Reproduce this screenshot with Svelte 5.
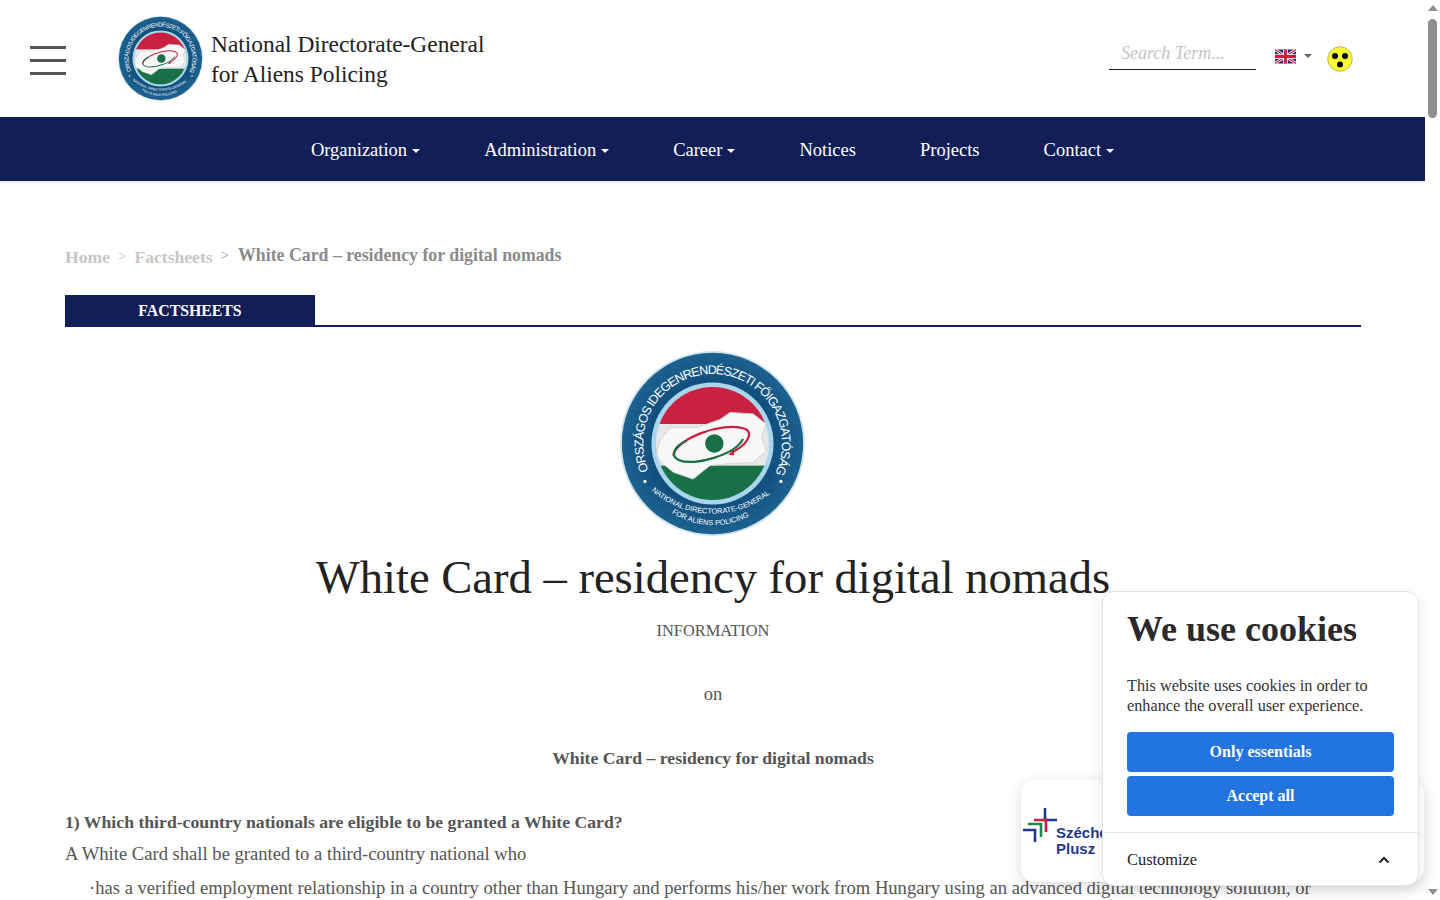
<script lang="ts">
  const navItems = [
    { label: 'Organization', caret: true },
    { label: 'Administration', caret: true },
    { label: 'Career', caret: true },
    { label: 'Notices', caret: false },
    { label: 'Projects', caret: false },
    { label: 'Contact', caret: true },
  ];
</script>

{#snippet logo(id: string)}
  <svg class="seal" viewBox="0 0 200 200" aria-hidden="true">
    <defs>
      <path id="{id}-top" d="M31 129.3A75 75 0 1 1 169 129.3" />
      <path id="{id}-b1" d="M34 151A100 100 0 0 0 166 151" />
      <path id="{id}-b2" d="M56 175A83 83 0 0 0 146 175" />
      <clipPath id="{id}-flag"><circle cx="100" cy="100" r="61" /></clipPath>
      <radialGradient id="{id}-ring" cx="50%" cy="50%" r="50%">
        <stop offset="60%" stop-color="#0f4a78" />
        <stop offset="100%" stop-color="#1c6290" />
      </radialGradient>
    </defs>
    <circle cx="100" cy="100" r="100" fill="#d5e3ea" />
    <circle cx="100" cy="100" r="98" fill="url(#{id}-ring)" />
    <circle cx="100" cy="100" r="66" fill="#a9d6ec" />
    <g clip-path="url(#{id}-flag)">
      <rect x="30" y="30" width="140" height="49" fill="#c9213f" />
      <rect x="30" y="79" width="140" height="45" fill="#e6e8e8" />
      <rect x="30" y="124" width="140" height="46" fill="#1a7046" />
    </g>
    <path
      d="M39.5 111.5 43 97 54 83 83 83 108 74 119 66.5 144 68 158 79 153 93.5 158 108 144 120.5 115 122 97 124 79 138.5 57.5 131 43 119Z"
      fill="#f7f7f7"
      stroke="#cfd4d6"
      stroke-width="1"
    />
    <g fill="none" stroke-width="2.4">
      <path d="M57.5 113C60 95 110 76 135 84 145 88 138 102 120 110" stroke="#c9213f" />
      <path d="M72 97C58 103 54 114 64 118 80 125 125 112 133 95" stroke="#1a7046" />
    </g>
    <path d="M117 112l7-6-1 7Z" fill="#c9213f" />
    <circle cx="102" cy="100" r="10" fill="#1a7046" />
    <g fill="#fff" font-family="'Liberation Sans', sans-serif">
      <text font-size="13.5" letter-spacing="-1"><textPath href="#{id}-top">ORSZÁGOS IDEGENRENDÉSZETI FŐIGAZGATÓSÁG</textPath></text>
      <text font-size="8"><textPath href="#{id}-b1">NATIONAL DIRECTORATE-GENERAL</textPath></text>
      <text font-size="8"><textPath href="#{id}-b2">FOR ALIENS POLICING</textPath></text>
    </g>
    <circle cx="27" cy="141" r="1.8" fill="#fff" />
    <circle cx="174" cy="141" r="1.8" fill="#fff" />
  </svg>
{/snippet}

<div class="shell">
  <main class="page">
    <header class="top">
      <button class="burger" aria-label="Menu"><span></span><span></span><span></span></button>
      <a class="brand" href="#home">
        <span class="brand-logo">{@render logo('s1')}</span>
        <span class="brand-name">National Directorate-General<br />for Aliens Policing</span>
      </a>
      <div class="tools">
        <div class="search">Search Term...</div>
        <div class="lang">
          <svg viewBox="0 0 60 40" width="21" height="15" aria-hidden="true">
            <rect width="60" height="40" fill="#1b2a68" />
            <path d="M0 0 60 40M60 0 0 40" stroke="#fff" stroke-width="8" />
            <path d="M0 0 60 40M60 0 0 40" stroke="#d3173f" stroke-width="3" />
            <path d="M30 0V40M0 20H60" stroke="#fff" stroke-width="13" />
            <path d="M30 0V40M0 20H60" stroke="#d3173f" stroke-width="8" />
          </svg>
          <i class="caret dark"></i>
        </div>
        <svg class="blind" viewBox="0 0 26 26" width="26" height="26" aria-hidden="true">
          <circle cx="13" cy="13" r="12.3" fill="#fbfb33" stroke="#8a8a4a" stroke-width="0.6" />
          <circle cx="8" cy="10" r="3" fill="#000" />
          <circle cx="18" cy="10" r="3" fill="#000" />
          <circle cx="13" cy="18.5" r="3" fill="#000" />
        </svg>
      </div>
    </header>

    <nav class="nav">
      {#each navItems as item}
        <a href="#nav">{item.label}{#if item.caret}<i class="caret"></i>{/if}</a>
      {/each}
    </nav>

    <div class="content">
      <div class="crumbs">
        <a href="#home">Home</a><span>&gt;</span><a class="second" href="#facts">Factsheets</a><span class="up">&gt;</span><strong>White Card – residency for digital nomads</strong>
      </div>

      <div class="section-head"><h2>FACTSHEETS</h2></div>

      <div class="hero-logo">{@render logo('s2')}</div>
      <h1>White Card – residency for digital nomads</h1>

      <p class="center info">INFORMATION</p>
      <p class="center">on</p>
      <p class="center"><b>White Card – residency for digital nomads</b></p>
      <p class="tight"><b>1) Which third-country nationals are eligible to be granted a White Card?</b></p>
      <p class="tight">A White Card shall be granted to a third-country national who</p>
      <p class="bullet">·has a verified employment relationship in a country other than Hungary and performs his/her work from Hungary using an advanced digital technology solution, or</p>
    </div>
  </main>

  <aside class="scrollbar" aria-hidden="true">
    <i class="arrow up-arrow"></i>
    <div class="track"><div class="thumb"></div></div>
    <i class="arrow down-arrow"></i>
  </aside>

  <div class="szechenyi">
    <svg viewBox="0 0 36 36" width="36" height="36" aria-hidden="true" fill="none" stroke-width="2.6">
      <path d="M22 0V12H34" stroke="#1d3a8a" />
      <path d="M11 12H23V24" stroke="#c9213f" />
      <path d="M5 16H18V29" stroke="#1c8a4a" />
      <path d="M0 22H12V34" stroke="#1d3a8a" />
    </svg>
    <div class="szechenyi-name">Széchenyi<br />Plusz</div>
  </div>

  <section class="cookies">
    <div class="cookies-body">
      <h3>We use cookies</h3>
      <p>This website uses cookies in order to enhance the overall user experience.</p>
      <button class="blue">Only essentials</button>
      <button class="blue">Accept all</button>
    </div>
    <div class="customize">
      <span>Customize</span>
      <svg viewBox="0 0 12 8" width="12" height="8" aria-hidden="true">
        <path d="M1.5 6.5 6 2l4.5 4.5" fill="none" stroke="#222" stroke-width="2" />
      </svg>
    </div>
  </section>
</div>

<style>
  :global(body) {
    font-family: 'Liberation Serif', serif;
    color: #555;
    overflow: hidden;
  }
  .shell {
    display: flex;
    height: 900px;
    overflow: hidden;
    position: relative;
  }
  .page {
    flex: 1;
    min-width: 0;
    height: 900px;
    overflow: hidden;
  }
  .top {
    height: 117px;
    display: flex;
    align-items: center;
    padding-left: 30px;
    padding-right: 72px;
  }
  .burger {
    width: 36px;
    padding: 0;
    border: 0;
    background: none;
    display: flex;
    flex-direction: column;
    gap: 10px;
    margin-top: 3px;
  }
  .burger span {
    height: 3px;
    background: #555;
  }
  .brand {
    display: flex;
    align-items: center;
    margin-left: 52px;
    gap: 8px;
    color: #222;
    text-decoration: none;
  }
  .brand-logo {
    width: 85px;
    height: 85px;
    display: block;
  }
  .seal {
    display: block;
    width: 100%;
    height: 100%;
  }
  .brand-name {
    font-size: 23.4px;
    line-height: 30px;
    margin-top: 1px;
  }
  .tools {
    margin-left: auto;
    display: flex;
    align-items: center;
  }
  .search {
    width: 147px;
    box-sizing: border-box;
    padding: 0 12px;
    height: 33px;
    line-height: 33px;
    margin-top: -11px;
    font-style: italic;
    font-size: 18px;
    color: #c4c4c4;
    border-bottom: 1px solid #222;
  }
  .lang {
    display: flex;
    align-items: center;
    margin-left: 19px;
    margin-top: -5px;
    gap: 8px;
  }
  .caret {
    display: inline-block;
    margin-left: 5px;
    vertical-align: 3px;
    border-top: 4px solid #fff;
    border-left: 4px solid transparent;
    border-right: 4px solid transparent;
  }
  .caret.dark {
    border-top-color: #666;
    margin-left: 0;
  }
  .blind {
    margin-left: 15px;
  }
  .nav {
    height: 64px;
    box-sizing: border-box;
    padding-top: 2px;
    background: #121e56;
    display: flex;
    align-items: center;
    justify-content: center;
    gap: 64px;
    box-shadow: 0 1px 3px rgba(0, 0, 0, 0.12);
  }
  .nav a {
    color: #fff;
    text-decoration: none;
    font-size: 18.5px;
  }
  .content {
    padding: 63px 64px 0 65px;
  }
  .crumbs {
    display: flex;
    align-items: baseline;
    font-size: 18px;
    color: #c6c6c6;
    height: 22px;
    line-height: 22px;
  }
  .crumbs a {
    color: #c6c6c6;
    font-weight: 700;
    font-size: 17.6px;
    text-decoration: none;
    position: relative;
    top: 2px;
  }
  .crumbs span {
    margin: 0 8px;
    font-size: 15px;
    color: #bbb;
  }
  .crumbs span.up {
    color: #999;
    margin: 0 9px 0 8px;
    transform: translateY(-1px);
  }
  .crumbs strong {
    color: #8a8a8a;
    font-size: 17.8px;
  }
  .section-head {
    margin-top: 29px;
    height: 32px;
    box-sizing: border-box;
    border-bottom: 2px solid #121e56;
  }
  .section-head h2 {
    margin: 0;
    width: 250px;
    height: 32px;
    background: #121e56;
    color: #fff;
    font-size: 15.8px;
    line-height: 31px;
    text-align: center;
  }
  .hero-logo {
    width: 185px;
    height: 185px;
    margin: 24px auto 0;
    transform: translateX(-1px);
  }
  h1 {
    margin: 13px 0 0;
    text-align: center;
    font-weight: 400;
    font-size: 46.6px;
    line-height: 56px;
    color: #222;
  }
  p {
    margin: 0;
    font-size: 18.6px;
    line-height: 32px;
  }
  p b {
    font-size: 17.7px;
  }
  .center {
    text-align: center;
    margin-top: 32px;
  }
  h1 + .center {
    margin-top: 10px;
  }
  .info + .center {
    margin-top: 31px;
  }
  .info {
    font-size: 16.4px;
  }
  .tight {
    margin-top: 32px;
  }
  .tight + .tight {
    margin-top: 0;
  }
  .bullet {
    margin-top: 2px;
    padding-left: 24px;
  }
  .scrollbar {
    width: 15px;
    height: 900px;
    background: #fff;
    display: flex;
    flex-direction: column;
    align-items: center;
    flex: none;
  }
  .track {
    flex: 1;
    width: 100%;
    padding-top: 3px;
    box-sizing: border-box;
    display: flex;
    justify-content: center;
  }
  .thumb {
    width: 9px;
    height: 99px;
    border-radius: 5px;
    background: #8f8f8f;
  }
  .arrow {
    display: block;
    margin: 5px 0;
    border-left: 5px solid transparent;
    border-right: 5px solid transparent;
  }
  .up-arrow {
    border-bottom: 6px solid #8f8f8f;
  }
  .down-arrow {
    border-top: 6px solid #8f8f8f;
  }
  .szechenyi {
    position: absolute;
    left: 1021px;
    top: 780px;
    width: 403px;
    height: 102px;
    background: #fff;
    border-radius: 14px;
    box-shadow: 0 4px 16px rgba(0, 0, 0, 0.14);
    display: flex;
    align-items: flex-start;
    box-sizing: border-box;
    padding: 28px 0 0 2px;
  }
  .szechenyi-name {
    font-family: 'Liberation Sans', sans-serif;
    font-weight: 700;
    font-size: 15px;
    line-height: 16px;
    color: #1d3a8a;
    margin: 17px 0 0 -3px;
  }
  .cookies {
    position: absolute;
    left: 1102px;
    top: 591px;
    width: 317px;
    height: 295px;
    box-sizing: border-box;
    background: #fff;
    border: 1px solid #e4e4e4;
    border-radius: 12px;
    box-shadow: 0 4px 14px rgba(0, 0, 0, 0.1);
    color: #333;
  }
  .cookies-body {
    padding: 16px 24px 16px 24px;
    display: flex;
    flex-direction: column;
    gap: 4px;
    border-bottom: 1px solid #e8e8e8;
    height: 241px;
    box-sizing: border-box;
  }
  .cookies h3 {
    margin: 0;
    font-size: 36px;
    line-height: 42px;
    color: #2a2a2a;
  }
  .cookies p {
    font-size: 16.3px;
    line-height: 20px;
    margin: 22px 0 12px;
  }
  .blue {
    height: 40px;
    background: #2374e1;
    color: #fff;
    border: 0;
    border-radius: 4px;
    font-family: inherit;
    font-size: 16px;
    font-weight: 700;
    flex: none;
  }
  .customize {
    display: flex;
    justify-content: space-between;
    align-items: center;
    padding: 17px 28px 0 24px;
    font-size: 16.4px;
    color: #222;
  }
</style>
